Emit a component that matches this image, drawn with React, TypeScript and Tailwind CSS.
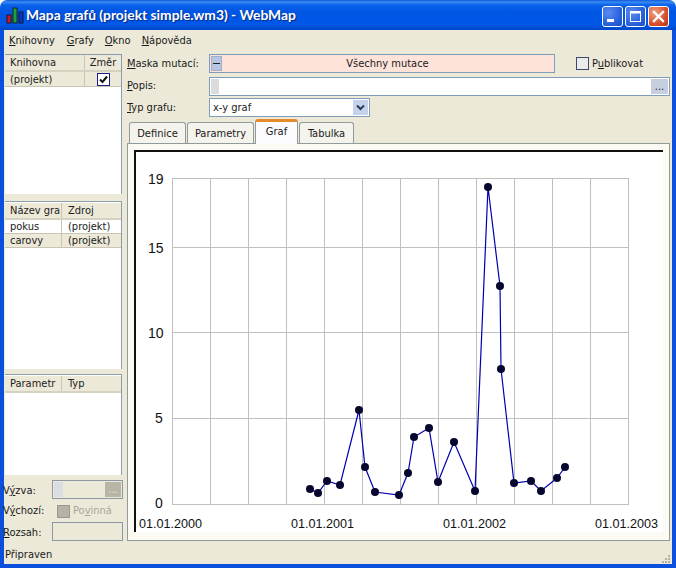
import React from "react";

const F = { fontFamily: '"DejaVu Sans Condensed", "DejaVu Sans", "Liberation Sans", sans-serif' };

const pts: [number, number][] = [
  [310, 489], [318, 493], [327, 481], [340, 485], [359, 410], [365, 467], [375, 492], [399, 495],
  [408, 473], [414, 437], [429, 428], [438, 482], [454, 442], [475, 491], [488, 187], [500, 286],
  [501, 369], [514, 483], [531, 481], [541, 491], [557, 478], [565, 467],
];
const vx = [172, 210, 248, 286, 324, 362, 400, 438, 476, 514, 552, 590, 628];
const hy = [178, 247, 332, 418, 504];

function Chart() {
  const ox = 136, oy = 152;
  return (
    <svg width="527" height="380" className="block">
      <g stroke="#c0c0c0" strokeWidth="1" shapeRendering="crispEdges">
        {vx.map((x) => <line key={x} x1={x - ox + 0.5} x2={x - ox + 0.5} y1={178 - oy} y2={505 - oy} />)}
        {hy.map((y) => <line key={y} x1={172 - ox} x2={629 - ox} y1={y - oy + 0.5} y2={y - oy + 0.5} />)}
      </g>
      <polyline fill="none" stroke="#0000b0" strokeWidth="1.2" points={pts.map(([x, y]) => `${x - ox},${y - oy}`).join(" ")} />
      {pts.map(([x, y], i) => <circle key={i} cx={x - ox} cy={y - oy} r="4" fill="#06062e" />)}
      <g fill="#111" fontSize="14" fontFamily='"Liberation Sans", sans-serif'>
        <text x={12} y={32}>19</text>
        <text x={12} y={101}>15</text>
        <text x={12} y={186}>10</text>
        <text x={19} y={271}>5</text>
        <text x={19} y={356}>0</text>
      </g>
      <g fill="#111" fontSize="12.6" fontFamily='"Liberation Sans", sans-serif'>
        <text x={3} y={376}>01.01.2000</text>
        <text x={155} y={376}>01.01.2001</text>
        <text x={307} y={376}>01.01.2002</text>
        <text x={459} y={376}>01.01.2003</text>
      </g>
    </svg>
  );
}

function U({ children }: { children: React.ReactNode }) {
  return <span className="underline">{children}</span>;
}

function Head({ a, b, split, check }: { a: string; b: string; split: number; check?: boolean }) {
  return (
    <div className="flex h-[17px] bg-[#ece9d8] border-b-2 border-[#d6d2c2] text-[#222]">
      <div className="pl-[5px] overflow-hidden whitespace-nowrap border-r border-[#c9c5b2] shrink-0" style={{ width: split }}>{a}</div>
      <div className={check ? "flex-1 text-center" : "flex-1 pl-[6px]"}>{b}</div>
    </div>
  );
}

function Row({ a, b, split, beige }: { a: string; b: string; split: number; beige?: boolean }) {
  return (
    <div className={`flex h-[14px] border-b border-[#c9c5b2] ${beige ? "bg-[#ece9d8]" : "bg-white"}`}>
      <div className="pl-[5px] border-r border-[#c9c5b2] shrink-0 h-full leading-[14px]" style={{ width: split }}>{a}</div>
      <div className="flex-1 pl-[6px] leading-[14px]">{b}</div>
    </div>
  );
}

function Tab({ label, w, active }: { label: string; w: string; active?: boolean }) {
  if (active) {
    return (
      <div className={`${w} h-[25px] bg-[#fcfcfe] border-x border-[#919b9c] border-t-[3px] border-t-[#e68b2c] rounded-t-[3px] text-center leading-[20px] -mb-[1px] relative z-10`}>
        {label}
      </div>
    );
  }
  return (
    <div className={`${w} h-[21px] mt-[2px] bg-[#f4f3ec] border-x border-t border-[#919b9c] rounded-t-[3px] text-center leading-[21px]`}>
      {label}
    </div>
  );
}

function Dots({ disabled }: { disabled?: boolean }) {
  return (
    <div className={`h-full flex items-end justify-center leading-[14px] ${disabled ? "w-[16px] bg-[#b8b4a6] text-[#e6e4da]" : "w-[17px] bg-[#c5cfe0] text-[#223]"}`}>
      ...
    </div>
  );
}

function WinBtn({ kind }: { kind: "min" | "max" | "close" }) {
  const bg =
    kind === "close"
      ? "bg-[radial-gradient(circle_at_30%_30%,#f0a080,#d8502c_60%,#c03010)]"
      : "bg-[radial-gradient(circle_at_30%_30%,#5a8cf0,#2a62dc_60%,#1c4cc8)]";
  return (
    <div className={`w-[21px] h-[21px] rounded-[3px] border border-white flex items-center justify-center ${bg}`}>
      <svg width="15" height="15" viewBox="0 0 15 15">
        {kind === "min" && <rect x="2" y="10" width="7" height="3" fill="#fff" />}
        {kind === "max" && (
          <>
            <rect x="2.5" y="2.5" width="10" height="10" fill="none" stroke="#fff" />
            <rect x="2" y="2" width="11" height="2.5" fill="#fff" />
          </>
        )}
        {kind === "close" && <path d="M3 3 L12 12 M12 3 L3 12" stroke="#fff" strokeWidth="2.4" strokeLinecap="square" />}
      </svg>
    </div>
  );
}

export default function App() {
  return (
    <div className="w-[676px] h-[568px] flex flex-col overflow-hidden text-[11px] text-[#1a1a1a] bg-white" style={F}>
      <div className="h-[30px] shrink-0 rounded-t-[7px] flex items-center pl-[6px] pr-[7px] bg-[linear-gradient(to_bottom,#0a58d8_0px,#3a8cf2_2px,#0a62ea_5px,#0055e4_12px,#0058e8_24px,#0048c8_30px)]">
        <svg width="18" height="18" viewBox="0 0 18 18" className="shrink-0">
          <rect x="1" y="9" width="4" height="8" fill="#d01818" stroke="#111" strokeWidth="0.8" />
          <rect x="7" y="2" width="4" height="15" fill="#20a030" stroke="#111" strokeWidth="0.8" />
          <rect x="13" y="6" width="4" height="11" fill="#1030c0" stroke="#111" strokeWidth="0.8" />
        </svg>
        <div className="ml-[2px] text-white font-bold text-[13.8px] whitespace-nowrap flex-1 [text-shadow:1px_1px_1px_#0a2a80]" style={{ fontFamily: 'Lato, sans-serif' }}>
          Mapa grafů (projekt simple.wm3) - WebMap
        </div>
        <div className="flex gap-[2px] mt-[3px]">
          <WinBtn kind="min" />
          <WinBtn kind="max" />
          <WinBtn kind="close" />
        </div>
      </div>

      <div className="flex-1 min-h-0 flex flex-col bg-[#ece9d8] border-x-4 border-b-4 border-[#0a50dc]">
        <div className="h-[22px] shrink-0 flex items-center gap-[12px] pl-[5px]">
          <span><U>K</U>nihovny</span>
          <span><U>G</U>rafy</span>
          <span className="-ml-[1px]"><U>O</U>kno</span>
          <span className="-ml-[1px]"><U>N</U>ápověda</span>
        </div>

        <div className="flex-1 min-h-0 flex">
          <div className="w-[119px] shrink-0 flex flex-col pt-[2px]">
            <div className="h-[141px] ml-[1px] mr-[1px] bg-white border-r border-t border-[#8a9cb0]">
              <Head a="Knihovna" b="Změr" split={80} check />
              <div className="flex h-[15px] bg-[#ece9d8] border-b border-[#c9c5b2]">
                <div className="w-[80px] pl-[5px] leading-[15px] border-r border-[#c9c5b2]">(projekt)</div>
                <div className="flex-1 flex items-center justify-center">
                  <div className="w-[13px] h-[13px] bg-white border border-[#1c1c8c] flex items-center justify-center">
                    <svg width="9" height="9" viewBox="0 0 9 9">
                      <path d="M1 4.5 L3.5 7 L8 1.5" fill="none" stroke="#111" strokeWidth="2" />
                    </svg>
                  </div>
                </div>
              </div>
            </div>

            <div className="h-[168px] mt-[7px] ml-[1px] mr-[1px] bg-white border-r border-t border-[#8a9cb0] pt-[1px]">
              <Head a="Název gra" b="Zdroj" split={57} />
              <Row a="pokus" b="(projekt)" split={57} />
              <Row a="carovy" b="(projekt)" split={57} beige />
            </div>

            <div className="h-[102px] mt-[5px] ml-[1px] mr-[1px] bg-white border-r border-t border-[#8a9cb0] pt-[1px]">
              <Head a="Parametr" b="Typ" split={57} />
            </div>

            <div className="flex items-center h-[19px] mt-[5px] -ml-[1px]">
              <span className="w-[49px] shrink-0 pt-[3px]">V<U>ý</U>zva:</span>
              <div className="w-[71px] h-[19px] border border-[#8d98a4] flex justify-between p-[1px]">
                <div className="w-[9px] bg-[#dcdde0]" />
                <Dots disabled />
              </div>
            </div>
            <div className="flex items-center h-[14px] mt-[5px] -ml-[1px]">
              <span className="w-[54px] shrink-0 pt-[1px]">V<U>ý</U>chozí:</span>
              <div className="w-[13px] h-[13px] bg-[#b5b2a7] border border-[#9a978c]" />
              <span className="ml-[3px] pt-[1px] text-[#a8a69a]">Po<U>v</U>inná</span>
            </div>
            <div className="flex items-center h-[19px] mt-[4px] -ml-[1px]">
              <span className="w-[49px] shrink-0 pt-[3px]"><U>R</U>ozsah:</span>
              <div className="w-[71px] h-[19px] border border-[#8d98a4]" />
            </div>
          </div>

          <div className="flex-1 min-w-0 flex flex-col pl-[4px] pt-[2px] pr-[2px]">
            <div className="flex items-center h-[19px]">
              <span className="w-[82px] shrink-0 pt-[2px]"><U>M</U>aska mutací:</span>
              <div className="w-[346px] h-[19px] bg-[#fde3da] border border-[#7f9db9] flex items-center p-[1px]">
                <div className="w-[11px] h-full bg-[#b6c6e2] border border-[#a0b0cc] flex items-center justify-center">
                  <div className="w-[7px] h-[1px] bg-[#222]" />
                </div>
                <div className="flex-1 text-center pt-[2px]">Všechny mutace</div>
              </div>
              <div className="ml-[21px] w-[13px] h-[13px] border border-[#3a4a6a] bg-[#eceaea]" />
              <span className="ml-[3px] pt-[2px]">P<U>u</U>blikovat</span>
            </div>

            <div className="flex items-center h-[19px] mt-[4px]">
              <span className="w-[82px] shrink-0"><U>P</U>opis:</span>
              <div className="flex-1 h-[19px] bg-white border border-[#7f9db9] flex justify-between p-[1px]">
                <div className="w-[8px] bg-[#dcdcdc]" />
                <Dots />
              </div>
            </div>

            <div className="flex items-center h-[19px] mt-[2px]">
              <span className="w-[82px] shrink-0 pt-[1px]"><U>T</U>yp grafu:</span>
              <div className="w-[161px] h-[19px] bg-white border border-[#7f9db9] flex items-center justify-between p-[1px]">
                <span className="pl-[2px] pt-[1px]">x-y graf</span>
                <div className="w-[15px] h-full bg-[#c5d2ea] flex items-center justify-center">
                  <svg width="9" height="7" viewBox="0 0 9 7">
                    <path d="M1 1.5 L4.5 5 L8 1.5" fill="none" stroke="#2a3a5c" strokeWidth="2" />
                  </svg>
                </div>
              </div>
            </div>

            <div className="flex items-end h-[25px] pl-[2px] mt-[1px] gap-[1px]">
              <Tab label="Definice" w="w-[57px]" />
              <Tab label="Parametry" w="w-[67px]" />
              <Tab label="Graf" w="w-[43px]" active />
              <Tab label="Tabulka" w="w-[55px]" />
            </div>

            <div className="w-[543px] h-[398px] bg-[#fbfaf3] border border-[#919b9c] pl-[6px] pt-[6px]">
              <div className="w-[529px] h-[382px] bg-white border-t-2 border-l-2 border-[#111]">
                <Chart />
              </div>
            </div>
          </div>
        </div>

        <div className="h-[23px] shrink-0 flex items-center justify-between pl-[1px] pr-[1px] pt-[2px]">
          <span className="pt-[4px]">Připraven</span>
          <svg width="9" height="9" viewBox="0 0 9 9" className="self-end">
            <g fill="#b5b2a2">
              <rect x="6" y="0" width="2" height="2" />
              <rect x="3" y="3" width="2" height="2" />
              <rect x="6" y="3" width="2" height="2" />
              <rect x="0" y="6" width="2" height="2" />
              <rect x="3" y="6" width="2" height="2" />
              <rect x="6" y="6" width="2" height="2" />
            </g>
          </svg>
        </div>
      </div>
    </div>
  );
}
